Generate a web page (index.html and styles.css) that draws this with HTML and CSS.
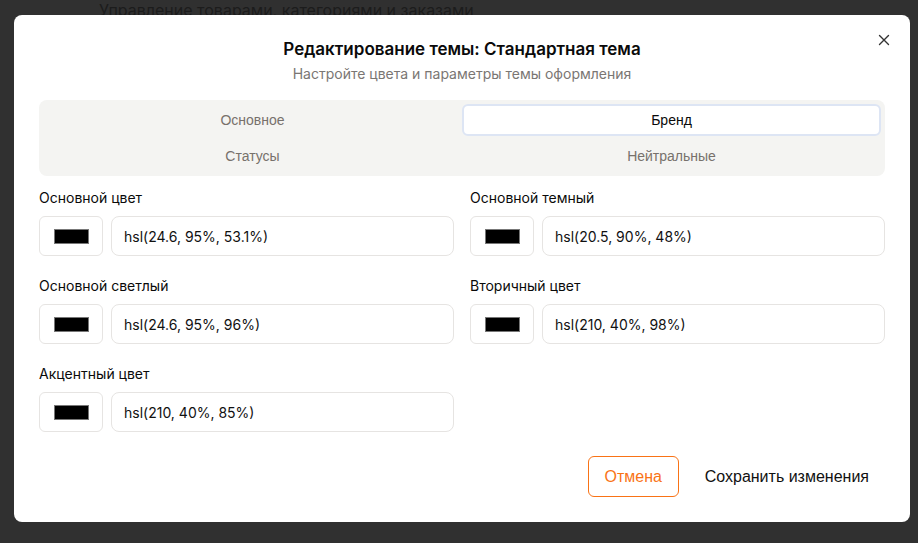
FILE: index.html
```html
<!DOCTYPE html>
<html lang="ru">
<head>
<meta charset="utf-8">
<link rel="stylesheet" href="styles.css">
</head>
<body>
<div class="page">
  <p class="page-sub">Управление товарами, категориями и заказами</p>
</div>
<div class="overlay">
  <div class="modal">
    <button class="close" aria-label="Закрыть">
      <svg width="12" height="12" viewBox="0 0 12 12"><path d="M1.5 1.5L10.5 10.5M10.5 1.5L1.5 10.5" stroke="#333" stroke-width="1.4" stroke-linecap="round"/></svg>
    </button>
    <h2 class="title">Редактирование темы: Стандартная тема</h2>
    <p class="subtitle">Настройте цвета и параметры темы оформления</p>
    <div class="tabs">
      <div class="tab">Основное</div>
      <div class="tab active">Бренд</div>
      <div class="tab">Статусы</div>
      <div class="tab">Нейтральные</div>
    </div>
    <div class="fields">
      <div class="field">
        <label class="label">Основной цвет</label>
        <div class="row"><div class="swatch"><span></span></div><div class="input">hsl(24.6, 95%, 53.1%)</div></div>
      </div>
      <div class="field">
        <label class="label">Основной темный</label>
        <div class="row"><div class="swatch"><span></span></div><div class="input">hsl(20.5, 90%, 48%)</div></div>
      </div>
      <div class="field">
        <label class="label">Основной светлый</label>
        <div class="row"><div class="swatch"><span></span></div><div class="input">hsl(24.6, 95%, 96%)</div></div>
      </div>
      <div class="field">
        <label class="label">Вторичный цвет</label>
        <div class="row"><div class="swatch"><span></span></div><div class="input">hsl(210, 40%, 98%)</div></div>
      </div>
      <div class="field">
        <label class="label">Акцентный цвет</label>
        <div class="row"><div class="swatch"><span></span></div><div class="input">hsl(210, 40%, 85%)</div></div>
      </div>
    </div>
    <div class="footer">
      <button class="btn btn-cancel">Отмена</button>
      <button class="btn btn-save">Сохранить изменения</button>
    </div>
  </div>
</div>
</body>
</html>
```
FILE: styles.css
```css
* { box-sizing: border-box; }
html, body { margin: 0; padding: 0; }
body {
  width: 918px;
  height: 543px;
  background: #303030;
  overflow: hidden;
  font-family: "Liberation Sans", Arial, sans-serif;
}
.page { padding: 0 0 0 99px; }
.page-sub {
  margin: 0;
  padding-top: 1px;
  font-family: Inter, "Liberation Sans", sans-serif;
  font-size: 16px;
  line-height: 18px;
  color: #1c1c1c;
}
.overlay {
  position: fixed;
  inset: 0;
  padding: 15px 8px 21px 14px;
}
.modal {
  position: relative;
  width: 896px;
  height: 507px;
  background: #fff;
  border-radius: 8px;
  padding: 23px 25px 25px 25px;
  display: flex;
  flex-direction: column;
}
.close {
  position: absolute;
  top: 19px;
  right: 20px;
  width: 12px;
  height: 12px;
  padding: 0;
  border: 0;
  background: none;
  display: flex;
}
.title {
  margin: 0;
  text-align: center;
  font-family: Inter, "Liberation Sans", sans-serif;
  font-weight: 600;
  font-size: 17px;
  line-height: 22px;
  color: #0a0a0a;
}
.subtitle {
  margin: 5px 0 0;
  text-align: center;
  font-family: Inter, "Liberation Sans", sans-serif;
  font-size: 14px;
  line-height: 18px;
  color: #7a7673;
}
.tabs {
  margin-top: 17px;
  background: #f4f4f2;
  border-radius: 8px;
  padding: 4px;
  display: grid;
  grid-template-columns: 1fr 1fr;
  grid-auto-rows: 32px;
  row-gap: 4px;
}
.tab {
  display: flex;
  align-items: center;
  justify-content: center;
  font-size: 14px;
  color: #77716c;
  border-radius: 6px;
  border: 2px solid transparent;
}
.tab.active {
  background: #fff;
  color: #0a0a0a;
  border-color: #dde5f4;
}
.fields {
  margin-top: 12px;
  display: grid;
  grid-template-columns: 1fr 1fr;
  column-gap: 16px;
  row-gap: 20px;
}
.field {
  display: flex;
  flex-direction: column;
  gap: 9px;
}
.label {
  font-family: Inter, "Liberation Sans", sans-serif;
  font-size: 14px;
  line-height: 19px;
  font-weight: 400;
  color: #0a0a0a;
}
.row {
  display: flex;
  gap: 8px;
  height: 40px;
}
.swatch {
  width: 64px;
  flex: none;
  border: 1px solid #e6e4e2;
  border-radius: 6px;
  display: flex;
  align-items: center;
  justify-content: center;
}
.swatch span {
  width: 35px;
  height: 15px;
  background: #000;
  border: 1px solid #777;
}
.input {
  flex: 1;
  border: 1px solid #e6e4e2;
  border-radius: 8px;
  padding: 0 12px;
  display: flex;
  align-items: center;
  font-family: Inter, "Liberation Sans", sans-serif;
  font-size: 14px;
  color: #111;
}
.footer {
  margin-top: auto;
  display: flex;
  justify-content: flex-end;
  gap: 9px;
}
.btn {
  height: 41px;
  font-family: "Liberation Sans", Arial, sans-serif;
  font-size: 16px;
  background: #fff;
  border-radius: 6px;
  padding: 0 15px 0 16px;
  cursor: pointer;
}
.btn-cancel {
  border: 1px solid #f97316;
  color: #f97316;
  width: 91px;
  padding: 0;
}
.btn-save {
  border: 1px solid transparent;
  color: #111;
}
```
